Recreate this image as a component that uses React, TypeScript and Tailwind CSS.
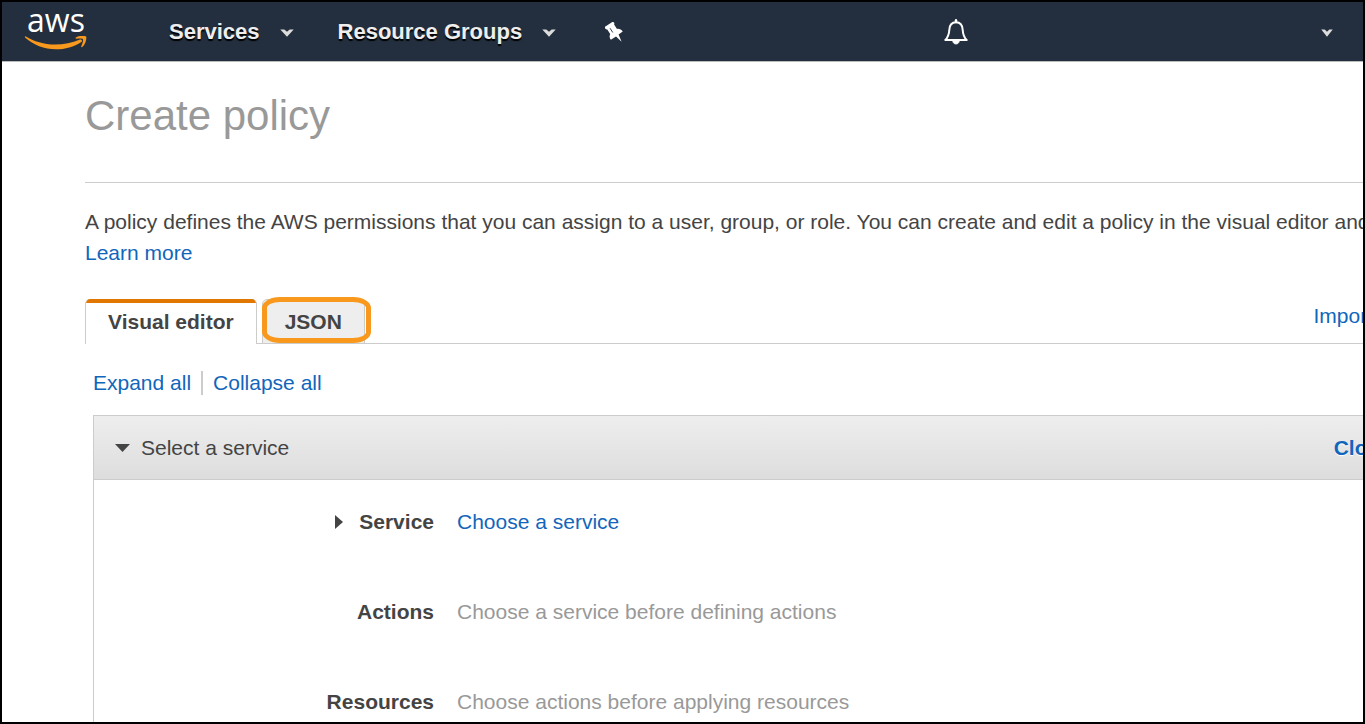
import type { ReactNode } from 'react';

function AwsLogo() {
  return (
    <a href="#home" aria-label="AWS home" className="flex w-16 flex-col items-center">
      <span className="h-7 font-['Open_Sans',sans-serif] text-[32px] leading-4 font-medium text-white">aws</span>
      <svg viewBox="0 0 64 16" className="-mt-1 h-4 w-16" fill="#f8991d" aria-hidden="true">
        <path d="M1.300 .3C10 5.500 20 8.600 31 8.600C40 8.600 48 7 56 3.600C57.500 3 58.800 4.800 57.400 5.900C50 11 41 13.200 32 13.200C20 13.200 9.500 9 1.300 1.800C.6 1.100 .8 .2 1.300 .3Z" />
        <path d="M51.800 1.400C55 -.6 60.800 -.5 62 .5C63.100 1.700 61.500 8.300 58.300 11.100C57.600 11.600 56.900 11.200 57.200 10.500C58.300 8 59.600 4.300 58.900 3.200C58.200 2.200 54.800 2.500 52.700 2.800C51.500 2.900 51.100 2.100 51.800 1.400Z" />
      </svg>
    </a>
  );
}

function NavCaret({ small = false }: { small?: boolean }) {
  return (
    <svg viewBox="0 0 14 8" className={small ? 'mt-[2px] h-2 w-3' : 'mt-[2px] h-2 w-[14px]'} preserveAspectRatio="none" aria-hidden="true">
      <path d="M.3 .6H4.300L7 2.800L9.700 .6H13.700L7 7.800Z" fill="#dcdcdc" />
    </svg>
  );
}

function PinIcon() {
  return (
    <svg viewBox="0 0 20 22" className="h-[22px] w-5" aria-hidden="true">
      <path
        d="M1 5.800L8.300 1C9.900 .5 10.900 2 10.100 3.500L13 7.900C15.300 7.600 17.500 8.400 18.700 10.600L14.600 13.600L17.600 20.800L12 15.500L6.900 18.800C5.400 17 5.300 14.900 6.200 12.900L3.300 8.500C2 8.700 .6 7.600 1 5.800Z"
        fill="#fff"
      />
      <path d="M6 7.200L8.800 11.500" stroke="#232f3e" strokeWidth=".9" />
    </svg>
  );
}

function BellIcon() {
  return (
    <svg viewBox="0 0 26 28" className="h-7 w-[26px]" fill="none" stroke="#fff" aria-hidden="true">
      <path
        d="M2.300 22C5.500 19 6 16.500 6.300 12C6.500 7.500 8.700 4.300 13 4.300C17.300 4.300 19.500 7.500 19.700 12C20 16.500 20.500 19 23.700 22Z"
        strokeWidth="2"
        strokeLinejoin="round"
      />
      <path d="M13 2.300V4" strokeWidth="2.400" strokeLinecap="round" />
      <path d="M9.800 23C10 27 16 27 16.200 23Z" fill="#fff" strokeWidth=".8" />
    </svg>
  );
}

function NavMenu({ children }: { children: ReactNode }) {
  return (
    <button
      type="button"
      className="flex items-center gap-5 text-[22px] leading-8 font-bold text-[#eee] [text-shadow:0_2px_1px_#000]"
    >
      {children}
      <NavCaret />
    </button>
  );
}

function FieldRow({ label, arrow = false, children }: { label: string; arrow?: boolean; children: ReactNode }) {
  return (
    <div className="flex gap-[23px]">
      <dt className="flex w-[340px] shrink-0 items-center justify-end gap-4 font-bold">
        {arrow && (
          <svg viewBox="0 0 8 14" className="h-[14px] w-2" fill="#444" aria-hidden="true">
            <path d="M0 0L8 7L0 14Z" />
          </svg>
        )}
        {label}
      </dt>
      <dd className="text-[#999]">{children}</dd>
    </div>
  );
}

export default function App() {
  return (
    <div className="h-screen overflow-hidden border-2 border-black bg-white font-['Liberation_Sans',Arial,sans-serif] text-[21px] leading-[30px] whitespace-nowrap text-[#444]">
      <header className="flex h-[60px] items-center border-b border-[#bbb] bg-[#232f3e] pr-[30px] pl-[22px]">
        <AwsLogo />
        <nav className="ml-[81px] flex items-center gap-11">
          <NavMenu>Services</NavMenu>
          <NavMenu>Resource Groups</NavMenu>
          <button type="button" aria-label="Pin shortcuts" className="ml-1">
            <PinIcon />
          </button>
        </nav>
        <button type="button" aria-label="Notifications" className="ml-auto">
          <BellIcon />
        </button>
        <button type="button" aria-label="Account menu" className="ml-[352px]">
          <NavCaret small />
        </button>
      </header>

      <main className="-mr-10 pt-[30px] pl-[83px]">
        <h1 className="border-b border-[#ccc] pb-[42px] text-[42px] leading-[48px] text-[#999]">Create policy</h1>
        <p className="mt-[23px] leading-[31px]">
          A policy defines the AWS permissions that you can assign to a user, group, or role. You can create and edit a
          policy in the visual editor and
          <br />
          <a href="#learn" className="text-[#1166bb]">Learn more</a>
        </p>

        <div className="mt-[31px] flex justify-between border-b border-[#ccc] pr-[30px]">
          <div role="tablist" className="-mb-px flex gap-[5px]">
            <button
              type="button"
              role="tab"
              aria-selected="true"
              className="relative h-[45px] overflow-hidden rounded-t-[5px] border-x border-[#ccc] bg-white px-[22px] font-bold before:absolute before:-inset-x-px before:top-0 before:h-1 before:bg-[#e07700]"
            >
              Visual editor
            </button>
            <button
              type="button"
              role="tab"
              aria-selected="false"
              className="relative h-[45px] rounded-t-[5px] border border-[#ccc] bg-[#eee] px-[22px] font-bold"
            >
              JSON
              <span className="absolute -top-[3px] -right-[7px] -left-px h-[46px] rounded-[18px/11px] border-[5px] border-[#f8991d]" />
            </button>
          </div>
          <a href="#import" className="mt-[2px] text-[#1166bb]">Import</a>
        </div>

        <div className="pt-6 pl-2">
          <div className="flex items-center gap-[10px] text-[#1166bb]">
            <button type="button">Expand all</button>
            <span className="h-6 w-[2px] bg-[#ccc]" />
            <button type="button">Collapse all</button>
          </div>

          <section className="mt-[17px] border border-[#ccc] pb-10">
            <div className="flex h-16 items-center justify-between border-b border-[#ccc] bg-linear-to-b from-[#eee] to-[#ddd] pr-[10px] pl-[21px]">
              <button type="button" className="flex items-center gap-[11px]">
                <svg viewBox="0 0 15 8" className="h-2 w-[15px]" fill="#444" aria-hidden="true">
                  <path d="M0 0H15L7.500 8Z" />
                </svg>
                Select a service
              </button>
              <a href="#clone" className="font-bold text-[#1166bb] [text-shadow:0_1px_1px_#fff]">Clone</a>
            </div>
            <dl className="flex flex-col gap-[60px] pt-[27px]">
              <FieldRow label="Service" arrow>
                <a href="#service" className="text-[#1166bb]">Choose a service</a>
              </FieldRow>
              <FieldRow label="Actions">Choose a service before defining actions</FieldRow>
              <FieldRow label="Resources">Choose actions before applying resources</FieldRow>
            </dl>
          </section>
        </div>
      </main>
    </div>
  );
}
